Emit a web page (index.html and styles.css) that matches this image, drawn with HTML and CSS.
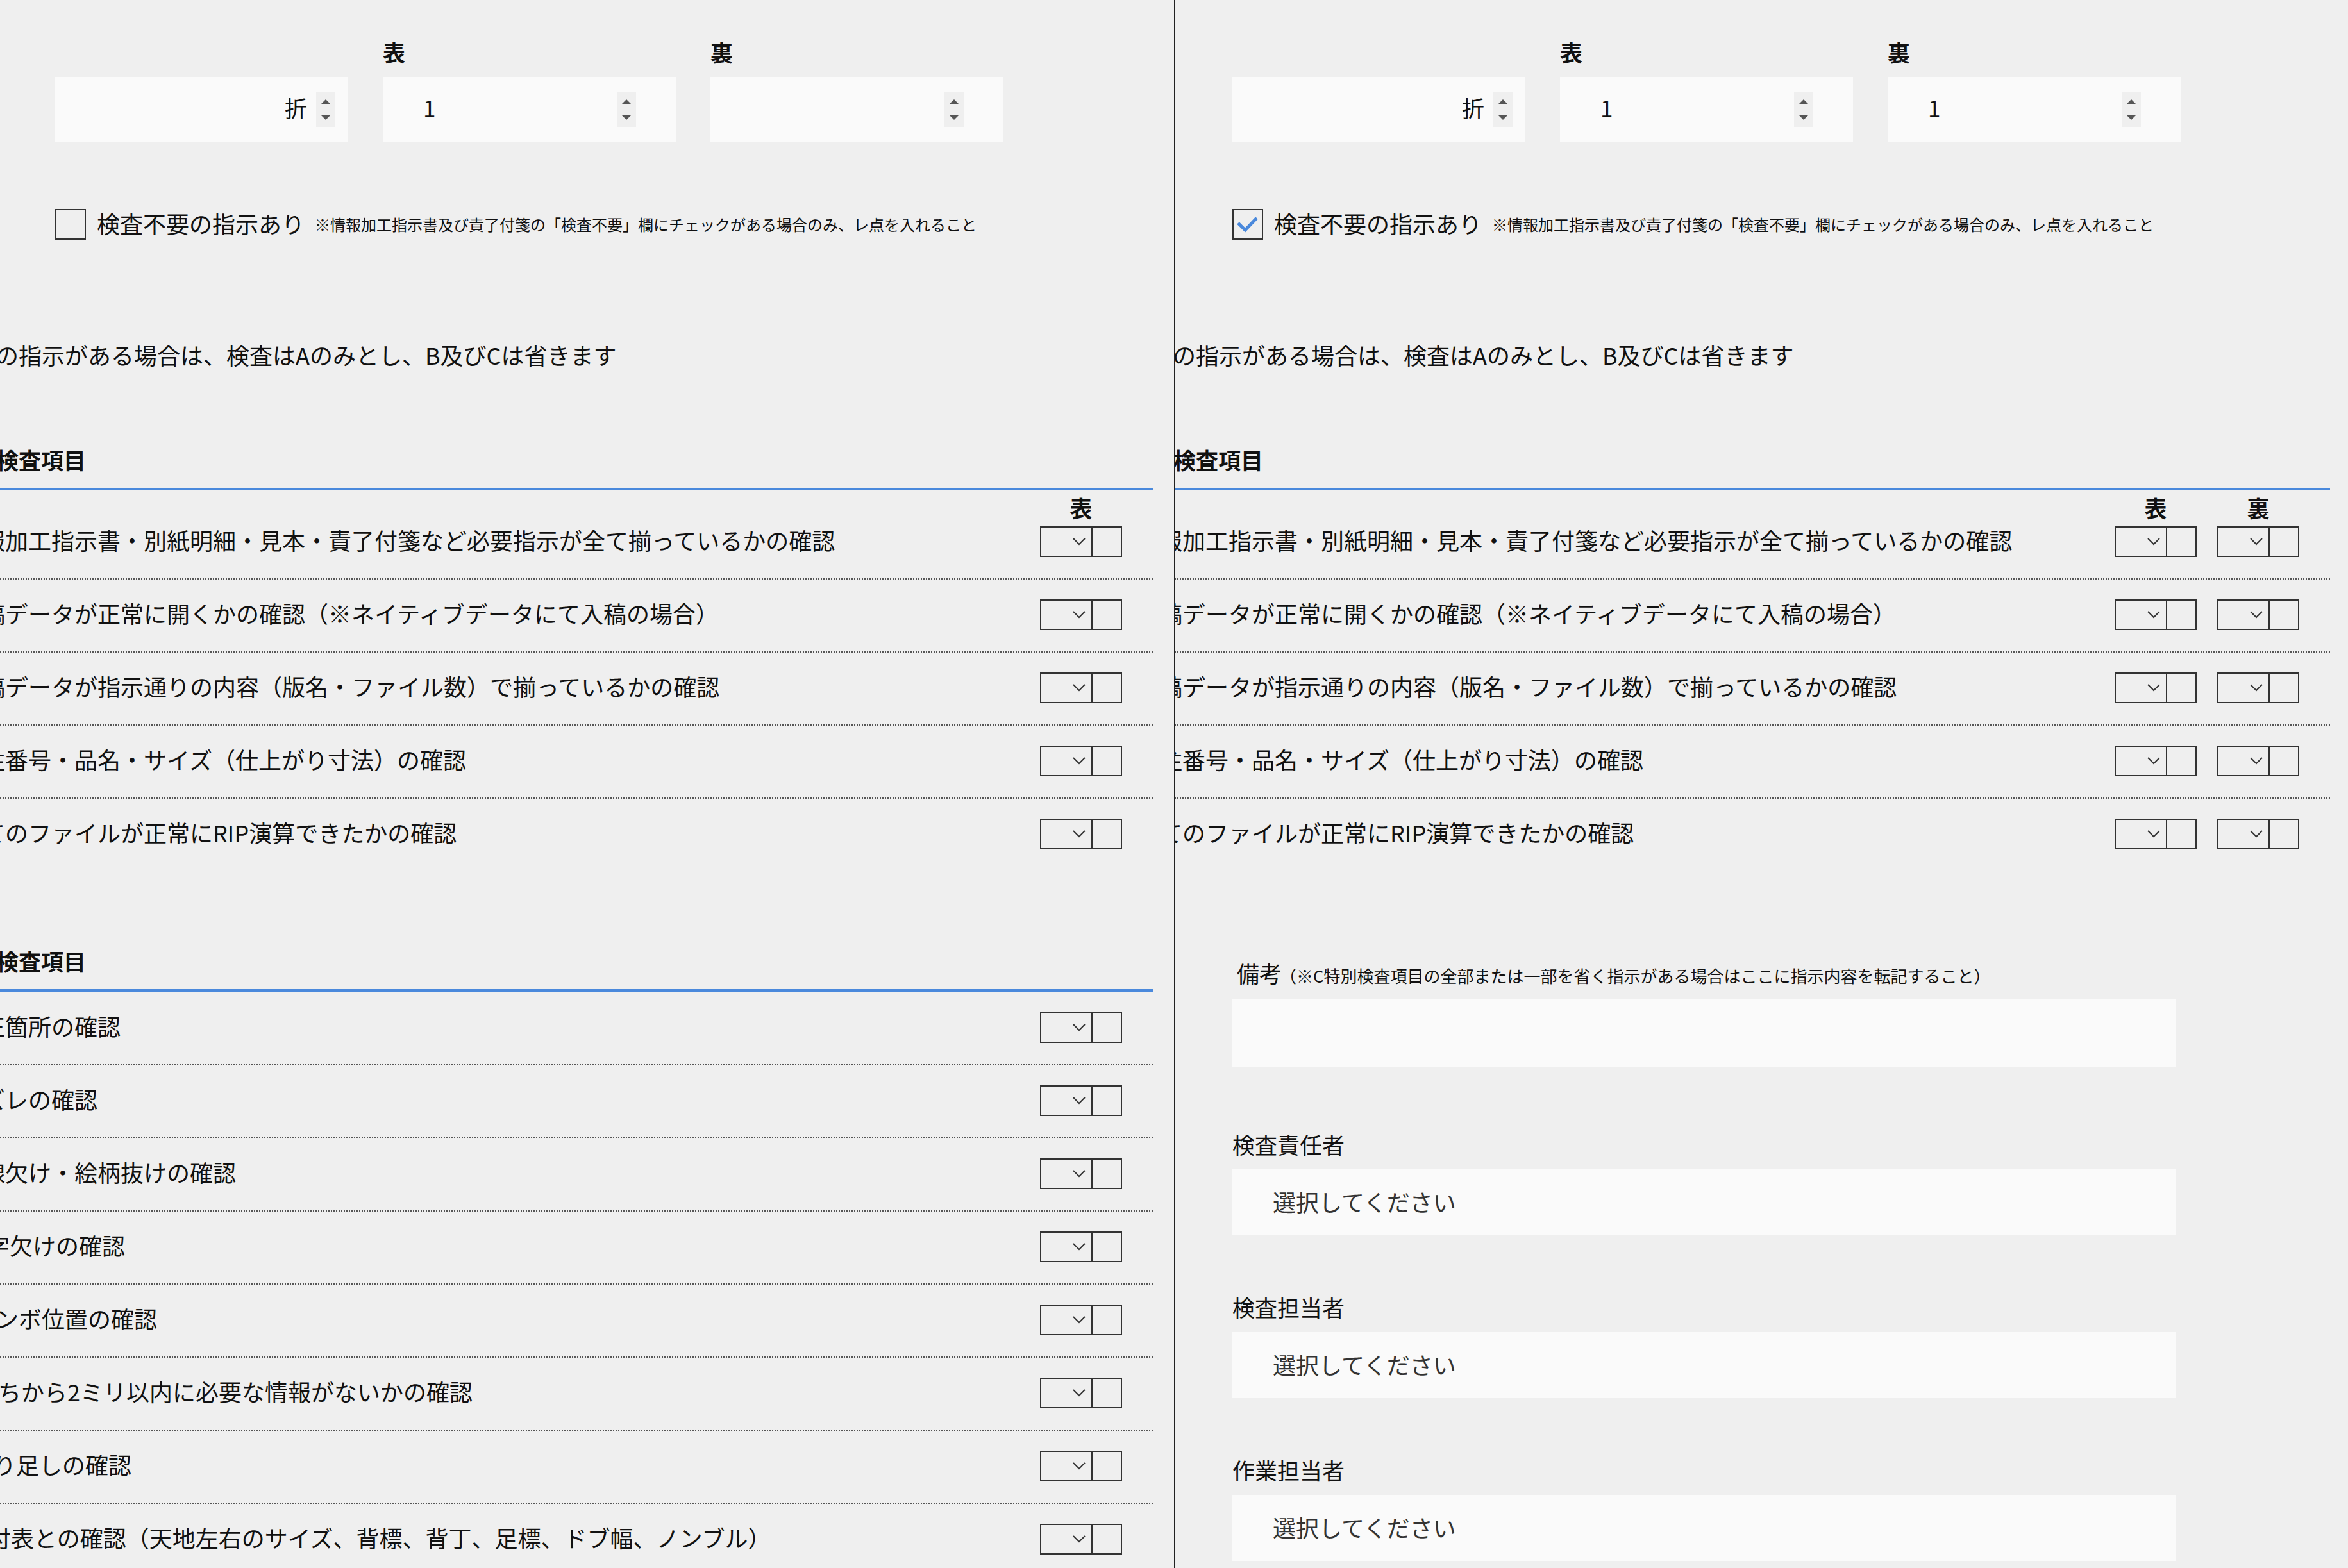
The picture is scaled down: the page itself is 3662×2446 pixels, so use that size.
FILE: index.html
```html
<!DOCTYPE html>
<html lang="ja">
<head>
<meta charset="utf-8">
<title>検査シート</title>
<link rel="stylesheet" href="styles.css">
</head>
<body>
<div class="page">

  <section class="panel panel-left">
    <div class="content">
      <div class="top">
        <div class="fields">
          <div class="field">
            <div class="flabel"></div>
            <div class="numbox numbox-suffix">
              <span class="val">折</span>
              <span class="spin"><svg class="tri" viewBox="0 0 14 7"><polygon points="0,7 7,0 14,7"/></svg><svg class="tri" viewBox="0 0 14 7"><polygon points="0,0 14,0 7,7"/></svg></span>
            </div>
          </div>
          <div class="field">
            <div class="flabel">表</div>
            <div class="numbox">
              <span class="val">1</span>
              <span class="spin"><svg class="tri" viewBox="0 0 14 7"><polygon points="0,7 7,0 14,7"/></svg><svg class="tri" viewBox="0 0 14 7"><polygon points="0,0 14,0 7,7"/></svg></span>
            </div>
          </div>
          <div class="field">
            <div class="flabel">裏</div>
            <div class="numbox">
              <span class="val"></span>
              <span class="spin"><svg class="tri" viewBox="0 0 14 7"><polygon points="0,7 7,0 14,7"/></svg><svg class="tri" viewBox="0 0 14 7"><polygon points="0,0 14,0 7,7"/></svg></span>
            </div>
          </div>
        </div>
        <div class="check-row">
          <span class="cbox"></span>
          <span class="check-label">検査不要の指示あり</span>
          <span class="check-note">※情報加工指示書及び責了付箋の「検査不要」欄にチェックがある場合のみ、レ点を入れること</span>
        </div>
      </div>

      <p class="desc">検査不要の指示がある場合は、検査はAのみとし、B及びCは省きます</p>

      <div class="sec sec-b">
        <h2 class="sec-title">検査項目</h2>
        <div class="col-head"><span>表</span></div>
        <ul class="rows">
          <li class="row"><span class="rtext">情報加工指示書・別紙明細・見本・責了付箋など必要指示が全て揃っているかの確認</span><span class="ctrls"><span class="sel"><span class="sel-main"><svg class="chev" viewBox="0 0 20 12"><polyline points="1,1 10,10 19,1"/></svg></span><span class="sel-extra"></span></span></span></li>
          <li class="row"><span class="rtext">入稿データが正常に開くかの確認（※ネイティブデータにて入稿の場合）</span><span class="ctrls"><span class="sel"><span class="sel-main"><svg class="chev" viewBox="0 0 20 12"><polyline points="1,1 10,10 19,1"/></svg></span><span class="sel-extra"></span></span></span></li>
          <li class="row"><span class="rtext">入稿データが指示通りの内容（版名・ファイル数）で揃っているかの確認</span><span class="ctrls"><span class="sel"><span class="sel-main"><svg class="chev" viewBox="0 0 20 12"><polyline points="1,1 10,10 19,1"/></svg></span><span class="sel-extra"></span></span></span></li>
          <li class="row"><span class="rtext">受注番号・品名・サイズ（仕上がり寸法）の確認</span><span class="ctrls"><span class="sel"><span class="sel-main"><svg class="chev" viewBox="0 0 20 12"><polyline points="1,1 10,10 19,1"/></svg></span><span class="sel-extra"></span></span></span></li>
          <li class="row"><span class="rtext">全てのファイルが正常にRIP演算できたかの確認</span><span class="ctrls"><span class="sel"><span class="sel-main"><svg class="chev" viewBox="0 0 20 12"><polyline points="1,1 10,10 19,1"/></svg></span><span class="sel-extra"></span></span></span></li>
        </ul>
      </div>

      <div class="sec sec-c">
        <h2 class="sec-title">検査項目</h2>
        <ul class="rows">
          <li class="row"><span class="rtext">修正箇所の確認</span><span class="ctrls"><span class="sel"><span class="sel-main"><svg class="chev" viewBox="0 0 20 12"><polyline points="1,1 10,10 19,1"/></svg></span><span class="sel-extra"></span></span></span></li>
          <li class="row"><span class="rtext">版ズレの確認</span><span class="ctrls"><span class="sel"><span class="sel-main"><svg class="chev" viewBox="0 0 20 12"><polyline points="1,1 10,10 19,1"/></svg></span><span class="sel-extra"></span></span></span></li>
          <li class="row"><span class="rtext">罫線欠け・絵柄抜けの確認</span><span class="ctrls"><span class="sel"><span class="sel-main"><svg class="chev" viewBox="0 0 20 12"><polyline points="1,1 10,10 19,1"/></svg></span><span class="sel-extra"></span></span></span></li>
          <li class="row"><span class="rtext sh7">文字欠けの確認</span><span class="ctrls"><span class="sel"><span class="sel-main"><svg class="chev" viewBox="0 0 20 12"><polyline points="1,1 10,10 19,1"/></svg></span><span class="sel-extra"></span></span></span></li>
          <li class="row"><span class="rtext sh21">トンボ位置の確認</span><span class="ctrls"><span class="sel"><span class="sel-main"><svg class="chev" viewBox="0 0 20 12"><polyline points="1,1 10,10 19,1"/></svg></span><span class="sel-extra"></span></span></span></li>
          <li class="row"><span class="rtext sh25">断ちから2ミリ以内に必要な情報がないかの確認</span><span class="ctrls"><span class="sel"><span class="sel-main"><svg class="chev" viewBox="0 0 20 12"><polyline points="1,1 10,10 19,1"/></svg></span><span class="sel-extra"></span></span></span></li>
          <li class="row"><span class="rtext sh17">塗り足しの確認</span><span class="ctrls"><span class="sel"><span class="sel-main"><svg class="chev" viewBox="0 0 20 12"><polyline points="1,1 10,10 19,1"/></svg></span><span class="sel-extra"></span></span></span></li>
          <li class="row"><span class="rtext sh9">割付表との確認（天地左右のサイズ、背標、背丁、足標、ドブ幅、ノンブル）</span><span class="ctrls"><span class="sel"><span class="sel-main"><svg class="chev" viewBox="0 0 20 12"><polyline points="1,1 10,10 19,1"/></svg></span><span class="sel-extra"></span></span></span></li>
        </ul>
      </div>
    </div>
  </section>

  <div class="divider"></div>

  <section class="panel panel-right">
    <div class="content">
      <div class="top">
        <div class="fields">
          <div class="field">
            <div class="flabel"></div>
            <div class="numbox numbox-suffix">
              <span class="val">折</span>
              <span class="spin"><svg class="tri" viewBox="0 0 14 7"><polygon points="0,7 7,0 14,7"/></svg><svg class="tri" viewBox="0 0 14 7"><polygon points="0,0 14,0 7,7"/></svg></span>
            </div>
          </div>
          <div class="field">
            <div class="flabel">表</div>
            <div class="numbox">
              <span class="val">1</span>
              <span class="spin"><svg class="tri" viewBox="0 0 14 7"><polygon points="0,7 7,0 14,7"/></svg><svg class="tri" viewBox="0 0 14 7"><polygon points="0,0 14,0 7,7"/></svg></span>
            </div>
          </div>
          <div class="field">
            <div class="flabel">裏</div>
            <div class="numbox">
              <span class="val">1</span>
              <span class="spin"><svg class="tri" viewBox="0 0 14 7"><polygon points="0,7 7,0 14,7"/></svg><svg class="tri" viewBox="0 0 14 7"><polygon points="0,0 14,0 7,7"/></svg></span>
            </div>
          </div>
        </div>
        <div class="check-row">
          <span class="cbox"><svg class="tick" viewBox="0 0 44 44"><polyline points="7,20 18,31 36,12"/></svg></span>
          <span class="check-label">検査不要の指示あり</span>
          <span class="check-note">※情報加工指示書及び責了付箋の「検査不要」欄にチェックがある場合のみ、レ点を入れること</span>
        </div>
      </div>

      <p class="desc">検査不要の指示がある場合は、検査はAのみとし、B及びCは省きます</p>

      <div class="sec sec-b">
        <h2 class="sec-title">検査項目</h2>
        <div class="col-head"><span>表</span><span>裏</span></div>
        <ul class="rows">
          <li class="row"><span class="rtext">情報加工指示書・別紙明細・見本・責了付箋など必要指示が全て揃っているかの確認</span><span class="ctrls"><span class="sel"><span class="sel-main"><svg class="chev" viewBox="0 0 20 12"><polyline points="1,1 10,10 19,1"/></svg></span><span class="sel-extra"></span></span><span class="sel"><span class="sel-main"><svg class="chev" viewBox="0 0 20 12"><polyline points="1,1 10,10 19,1"/></svg></span><span class="sel-extra"></span></span></span></li>
          <li class="row"><span class="rtext">入稿データが正常に開くかの確認（※ネイティブデータにて入稿の場合）</span><span class="ctrls"><span class="sel"><span class="sel-main"><svg class="chev" viewBox="0 0 20 12"><polyline points="1,1 10,10 19,1"/></svg></span><span class="sel-extra"></span></span><span class="sel"><span class="sel-main"><svg class="chev" viewBox="0 0 20 12"><polyline points="1,1 10,10 19,1"/></svg></span><span class="sel-extra"></span></span></span></li>
          <li class="row"><span class="rtext">入稿データが指示通りの内容（版名・ファイル数）で揃っているかの確認</span><span class="ctrls"><span class="sel"><span class="sel-main"><svg class="chev" viewBox="0 0 20 12"><polyline points="1,1 10,10 19,1"/></svg></span><span class="sel-extra"></span></span><span class="sel"><span class="sel-main"><svg class="chev" viewBox="0 0 20 12"><polyline points="1,1 10,10 19,1"/></svg></span><span class="sel-extra"></span></span></span></li>
          <li class="row"><span class="rtext">受注番号・品名・サイズ（仕上がり寸法）の確認</span><span class="ctrls"><span class="sel"><span class="sel-main"><svg class="chev" viewBox="0 0 20 12"><polyline points="1,1 10,10 19,1"/></svg></span><span class="sel-extra"></span></span><span class="sel"><span class="sel-main"><svg class="chev" viewBox="0 0 20 12"><polyline points="1,1 10,10 19,1"/></svg></span><span class="sel-extra"></span></span></span></li>
          <li class="row"><span class="rtext">全てのファイルが正常にRIP演算できたかの確認</span><span class="ctrls"><span class="sel"><span class="sel-main"><svg class="chev" viewBox="0 0 20 12"><polyline points="1,1 10,10 19,1"/></svg></span><span class="sel-extra"></span></span><span class="sel"><span class="sel-main"><svg class="chev" viewBox="0 0 20 12"><polyline points="1,1 10,10 19,1"/></svg></span><span class="sel-extra"></span></span></span></li>
        </ul>
      </div>

      <div class="extra">
        <div class="rm-label">備考<span class="rm-note">（※C特別検査項目の全部または一部を省く指示がある場合はここに指示内容を転記すること）</span></div>
        <div class="textbox"></div>

        <div class="pick-label">検査責任者</div>
        <div class="pick">選択してください</div>

        <div class="pick-label">検査担当者</div>
        <div class="pick">選択してください</div>

        <div class="pick-label">作業担当者</div>
        <div class="pick">選択してください</div>
      </div>
    </div>
  </section>

</div>
</body>
</html>
```

FILE: styles.css
```css
html, body {
  margin: 0;
  padding: 0;
}

body {
  background: #efefef;
  color: #111;
  font-family: "Noto Sans CJK JP", "Noto Sans", sans-serif;
  font-size: 36px;
  width: 3662px;
  height: 2446px;
  overflow: hidden;
}

.page {
  display: flex;
  height: 2446px;
}

.panel {
  height: 100%;
  overflow: hidden;
  flex: none;
}

.panel-left {
  width: 1831px;
}

.panel-right {
  width: 1829px;
}

.divider {
  width: 2px;
  flex: none;
  background: #222;
}

.content {
  width: 1831px;
  box-sizing: border-box;
}

.panel-right .content {
  margin-left: 3px;
}

/* top number fields */
.top {
  padding: 61px 0 0 86px;
}

.fields {
  display: grid;
  grid-template-columns: repeat(3, 457px);
  column-gap: 54px;
}

.flabel {
  height: 40px;
  line-height: 40px;
  font-size: 35px;
  font-weight: 700;
  margin-bottom: 19px;
}

.numbox {
  height: 102px;
  box-sizing: border-box;
  background: #fafafa;
  display: flex;
  align-items: center;
  padding: 0 62px 0 63px;
  font-size: 35px;
}

.numbox .val {
  flex: 1;
  line-height: 40px;
  padding-bottom: 6px;
  color: #111;
}

.numbox-suffix {
  padding-right: 20px;
}

.numbox-suffix .val {
  text-align: right;
  margin-right: 14px;
}

.spin {
  width: 30px;
  height: 54px;
  box-sizing: border-box;
  padding: 11px 0;
  background: #efefef;
  display: flex;
  flex-direction: column;
  justify-content: space-between;
  align-items: center;
}

.tri {
  width: 14px;
  height: 7px;
  display: block;
  fill: #555;
}

/* checkbox row */
.check-row {
  display: flex;
  align-items: center;
  margin-top: 104px;
}

.cbox {
  width: 48px;
  height: 48px;
  box-sizing: border-box;
  border: 2px solid #333;
  flex: none;
  display: block;
}

.tick {
  width: 44px;
  height: 44px;
  display: block;
  fill: none;
  stroke: #4a89dc;
  stroke-width: 5;
}

.check-label {
  margin-left: 17px;
  line-height: 40px;
  padding-bottom: 4px;
}

.check-note {
  margin-left: 16px;
  font-size: 24px;
  line-height: 30px;
}

/* description */
.desc {
  margin: 159px 0 0 -151px;
  line-height: 40px;
  white-space: nowrap;
}

/* sections */
.sec {
  margin-left: -64px;
  margin-right: 33px;
}

.sec-title {
  margin: 124px 0 0;
  padding: 0 0 24px 58px;
  font-size: 35px;
  font-weight: 700;
  line-height: 40px;
  border-bottom: 4px solid #4a89dc;
}

.sec-c .sec-title {
  margin-top: 121px;
}

.col-head {
  display: flex;
  justify-content: flex-end;
  gap: 32px;
  height: 56px;
  line-height: 53px;
  padding-right: 48px;
  font-size: 35px;
  font-weight: 700;
}

.col-head span {
  width: 128px;
  text-align: center;
}

.rows {
  list-style: none;
  margin: 0;
  padding: 0;
}

.row {
  display: flex;
  align-items: center;
  padding: 31px 48px 33px 0;
  border-bottom: 2px dotted #555;
}

.row:last-child {
  border-bottom: none;
}

.col-head + .rows .row:first-child {
  padding-top: 0;
}

.sec-c .row:first-child {
  padding-top: 32px;
}

.rtext {
  flex: 1;
  white-space: nowrap;
  line-height: 42px;
  padding-bottom: 6px;
}

.sh7 { padding-left: 7px; }
.sh9 { padding-left: 9px; }
.sh17 { padding-left: 17px; }
.sh21 { padding-left: 21px; }
.sh25 { padding-left: 25px; }

.ctrls {
  display: flex;
  gap: 32px;
  flex: none;
}

.sel {
  width: 128px;
  height: 48px;
  box-sizing: border-box;
  border: 2px solid #333;
  display: flex;
}

.sel-main {
  width: 80px;
  box-sizing: border-box;
  border-right: 2px solid #333;
  display: flex;
  align-items: center;
  justify-content: flex-end;
  padding-right: 9px;
}

.sel-extra {
  flex: 1;
}

.chev {
  width: 20px;
  height: 12px;
  display: block;
  fill: none;
  stroke: #333;
  stroke-width: 2;
}

/* right panel lower fields */
.extra {
  padding-left: 86px;
  width: 1472px;
}

.rm-label {
  margin-top: 140px;
  padding-left: 7px;
  line-height: 40px;
  font-size: 35px;
  white-space: nowrap;
}

.rm-note {
  margin-left: -3px;
  font-size: 26px;
}

.textbox {
  margin-top: 17px;
  height: 105px;
  background: #fafafa;
}

.pick-label {
  margin-top: 92px;
  line-height: 40px;
  font-size: 35px;
}

.textbox + .pick-label {
  margin-top: 101px;
}

.pick {
  margin-top: 19px;
  height: 103px;
  box-sizing: border-box;
  background: #fafafa;
  padding-left: 63px;
  padding-bottom: 4px;
  display: flex;
  align-items: center;
  color: #333;
}
```
